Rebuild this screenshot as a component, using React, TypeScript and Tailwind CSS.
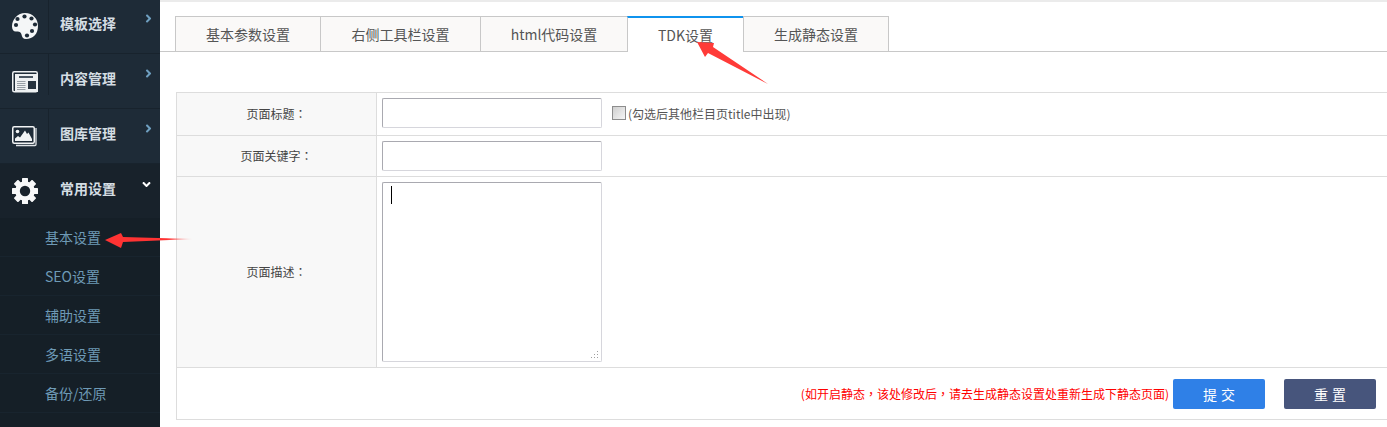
import React from "react";
import { FaAngleRight, FaAngleDown } from "react-icons/fa";

const font = "font-['Microsoft_YaHei','Noto_Sans_CJK_SC','Noto_Sans',sans-serif]";
const punct = "font-['Noto_Sans_CJK_TC',sans-serif]";
const DARK = "#1e2b37";

function PaletteIcon() {
  const dots: [number, number][] = [[5.5, 6], [12.5, 3.5], [19.5, 5.5], [23, 11.5], [20, 18], [15, 22.5], [4, 12]];
  return (
    <svg width="26" height="26" viewBox="0 0 26 26">
      <path d="M13 0C21 0 26 6 26 13C26 21 21 26 14 26C11 26 10 24 9.5 21.5C9 19 7 18 4.5 18.5C2 19 0 17 0 13.5C0 6 6 0 13 0Z" fill="#f4f6f7" />
      {dots.map(([x, y]) => (
        <circle key={`${x}-${y}`} cx={x} cy={y} r="2.1" fill={DARK} />
      ))}
    </svg>
  );
}

function NewsIcon() {
  return (
    <svg width="26" height="26" viewBox="0 0 26 26">
      <rect x="0.75" y="3.75" width="24.5" height="20" rx="1.5" fill="none" stroke="#eef1f2" strokeWidth="1.5" />
      <rect x="3" y="6" width="23" height="18" fill="#eef1f2" />
      <rect x="7" y="8" width="14" height="2" fill="#4a5661" />
      <g fill="#98a0a6">
        <rect x="5" y="13" width="8.5" height="1" />
        <rect x="5" y="15" width="8.5" height="1" />
        <rect x="5" y="17" width="8.5" height="1" />
        <rect x="5" y="19" width="8.5" height="1" />
        <rect x="5" y="21" width="8.5" height="1" />
      </g>
      <rect x="16" y="13" width="8" height="8" fill="#26333e" />
    </svg>
  );
}

function ImageIcon() {
  return (
    <svg width="26" height="26" viewBox="0 0 26 26">
      <path d="M24 5V21.5Q24 22.5 23 22.5H4" fill="none" stroke="#dfe3e6" strokeWidth="1.3" />
      <rect x="0.75" y="3.75" width="21.5" height="16.5" rx="1.5" fill={DARK} stroke="#f2f4f5" strokeWidth="1.5" />
      <circle cx="5.5" cy="8.5" r="1.8" fill="#f2f4f5" />
      <path d="M3 18V15.5L6 13L8 14.5L13 7.5L15 11L16.5 9.5L20 16V18Z" fill="#f2f4f5" />
    </svg>
  );
}

function GearIcon() {
  const angles = [0, 45, 90, 135, 180, 225, 270, 315];
  return (
    <svg width="26" height="26" viewBox="0 0 26 26">
      <g fill="#f7f8f9">
        {angles.map((a) => (
          <rect key={a} x="10" y="0" width="6" height="6" rx="0.6" transform={`rotate(${a} 13 13)`} />
        ))}
        <circle cx="13" cy="13" r="9.8" />
      </g>
      <circle cx="13" cy="13" r="5.2" fill="#18222b" />
    </svg>
  );
}

const menu = [
  { label: "模板选择", Icon: PaletteIcon },
  { label: "内容管理", Icon: NewsIcon },
  { label: "图库管理", Icon: ImageIcon },
];
const sub = ["基本设置", "SEO设置", "辅助设置", "多语设置", "备份/还原"];
const tabs = [
  { label: "基本参数设置", w: "w-[146px]" },
  { label: "右侧工具栏设置", w: "w-[161px]" },
  { label: "html代码设置", w: "w-[148px]" },
  { label: "TDK设置", w: "w-[117px]", active: true },
  { label: "生成静态设置", w: "w-[146px]" },
];

function Row({ label, h, children }: { label: string; h: string; children: React.ReactNode }) {
  return (
    <div className={`flex ${h} border-b border-[#dddddd]`}>
      <div className="w-[200px] shrink-0 flex items-center justify-center bg-[#f8f8f8] border-r border-[#dddddd] text-xs text-[#444444]">
        {label}
        <span className={punct}>：</span>
      </div>
      <div className="flex-1 flex items-start pt-[5px] pl-[5px]">{children}</div>
    </div>
  );
}

const inputCls =
  "block w-[220px] h-[30px] bg-white rounded-[2px] border border-[#d6d6dc] border-t-[#a9a9b0] border-l-[#a9a9b0]";

export default function App() {
  return (
    <div className={`relative flex h-[427px] w-[1387px] overflow-hidden bg-white ${font}`}>
      <aside className="w-[160px] shrink-0 bg-[#151f27] flex flex-col -mt-px">
        {menu.map(({ label, Icon }) => (
          <div key={label} className="relative h-[55px] bg-[#1e2b37] border-b border-[#18232d] flex items-start">
            <div className="w-[49px] h-[41px] shrink-0 border-r border-[#18232d] flex items-start justify-center pt-[14px] pl-px">
              <Icon />
            </div>
            <span className="ml-[11px] mt-[15px] text-sm leading-[18px] font-bold text-[#d4dde3]">{label}</span>
            <FaAngleRight className="absolute left-[142px] top-[13px] text-[#6f9fc0] text-[13px]" />
          </div>
        ))}
        <div className="relative h-[54px] bg-[#18222b] flex items-start">
          <div className="w-[49px] h-[41px] shrink-0 flex items-start justify-center pt-[14px] pl-px">
            <GearIcon />
          </div>
          <span className="ml-[11px] mt-[15px] text-sm leading-[18px] font-bold text-[#d4dde3]">常用设置</span>
          <FaAngleDown className="absolute left-[140px] top-[14px] text-white text-[13px]" />
        </div>
        {sub.map((s) => (
          <div key={s} className="h-[39px] pl-[45px] flex items-center border-b border-[#18242e] text-sm text-[#6e9ab6]">
            {s}
          </div>
        ))}
      </aside>

      <main className="flex-1 min-w-0 flex flex-col border-t-2 border-[#ebebeb]">
        <div className="h-[50px] pt-[14px] pl-[15px] border-b border-[#c8c8c8] flex items-stretch">
          {tabs.map((t) => (
            <div
              key={t.label}
              className={`${t.w} flex items-center justify-center text-sm ${
                t.active
                  ? "h-[36px] bg-white border-t-2 border-t-[#0f93ee] border-x border-x-[#c8c8c8] text-[#555555] -ml-px"
                  : "h-[35px] bg-[#faf9f8] border-t border-x border-[#c8c8c8] text-[#555555] -ml-px first:ml-0"
              }`}
            >
              {t.label}
            </div>
          ))}
        </div>

        <div className="mt-[40px] ml-[16px] -mr-[4px] border-t border-l border-[#dddddd]">
          <Row label="页面标题" h="h-[43px]">
            <div className={inputCls} />
            <div className="ml-[10px] mt-[8px] w-[14px] h-[14px] border border-[#8d8d8d] bg-gradient-to-br from-[#cfcfcf] to-[#f6f6f6]" />
            <span className="ml-[2px] mt-[8px] text-xs leading-[16px] text-[#555555]">(勾选后其他栏目页title中出现)</span>
          </Row>
          <Row label="页面关键字" h="h-[41px]">
            <div className={inputCls} />
          </Row>
          <Row label="页面描述" h="h-[191px]">
            <div className="relative block w-[220px] h-[180px] bg-white rounded-[2px] border border-[#d6d6dc] border-t-[#a9a9b0] border-l-[#a9a9b0]">
              <div className="absolute left-[8px] top-[3px] w-px h-[18px] bg-black" />
              <svg className="absolute right-[2px] bottom-[2px]" width="9" height="9" viewBox="0 0 9 9">
                <g fill="#a0a0a0">
                  <rect x="7" y="1" width="1" height="1" />
                  <rect x="7" y="4" width="1" height="1" />
                  <rect x="7" y="7" width="1" height="1" />
                  <rect x="4" y="4" width="1" height="1" />
                  <rect x="4" y="7" width="1" height="1" />
                  <rect x="1" y="7" width="1" height="1" />
                </g>
              </svg>
            </div>
          </Row>
          <div className="h-[52px] border-b border-[#dddddd] flex items-center justify-end pr-[15px]">
            <span className="text-xs text-[#ff0000] mr-[4px]">
              (如开启静态<span className={punct}>，</span>该处修改后<span className={punct}>，</span>请去生成静态设置处重新生成下静态页面)
            </span>
            <div className="w-[92px] h-[30px] pl-[4px] rounded-[2px] bg-[#2f80e7] text-white text-sm flex items-center justify-center tracking-[4px]">提交</div>
            <div className="ml-[19px] w-[92px] h-[30px] pl-[4px] rounded-[2px] bg-[#47557c] text-white text-sm flex items-center justify-center tracking-[4px]">重置</div>
          </div>
        </div>
      </main>

      <svg className="absolute left-0 top-0 pointer-events-none" width="1387" height="427" viewBox="0 0 1387 427">
        <defs>
          <linearGradient id="a1" x1="105" x2="193" y1="0" y2="0" gradientUnits="userSpaceOnUse">
            <stop offset="0.7" stopColor="#ff3333" />
            <stop offset="1" stopColor="#ff3333" stopOpacity="0.1" />
          </linearGradient>
        </defs>
        <polygon points="105,240 121,233 123,237 193,239 123,242 121,248" fill="url(#a1)" />
        <polygon points="697,42 714,43 713,47 768,84 708,53 705,57" fill="#ff3b38" />
      </svg>
    </div>
  );
}
